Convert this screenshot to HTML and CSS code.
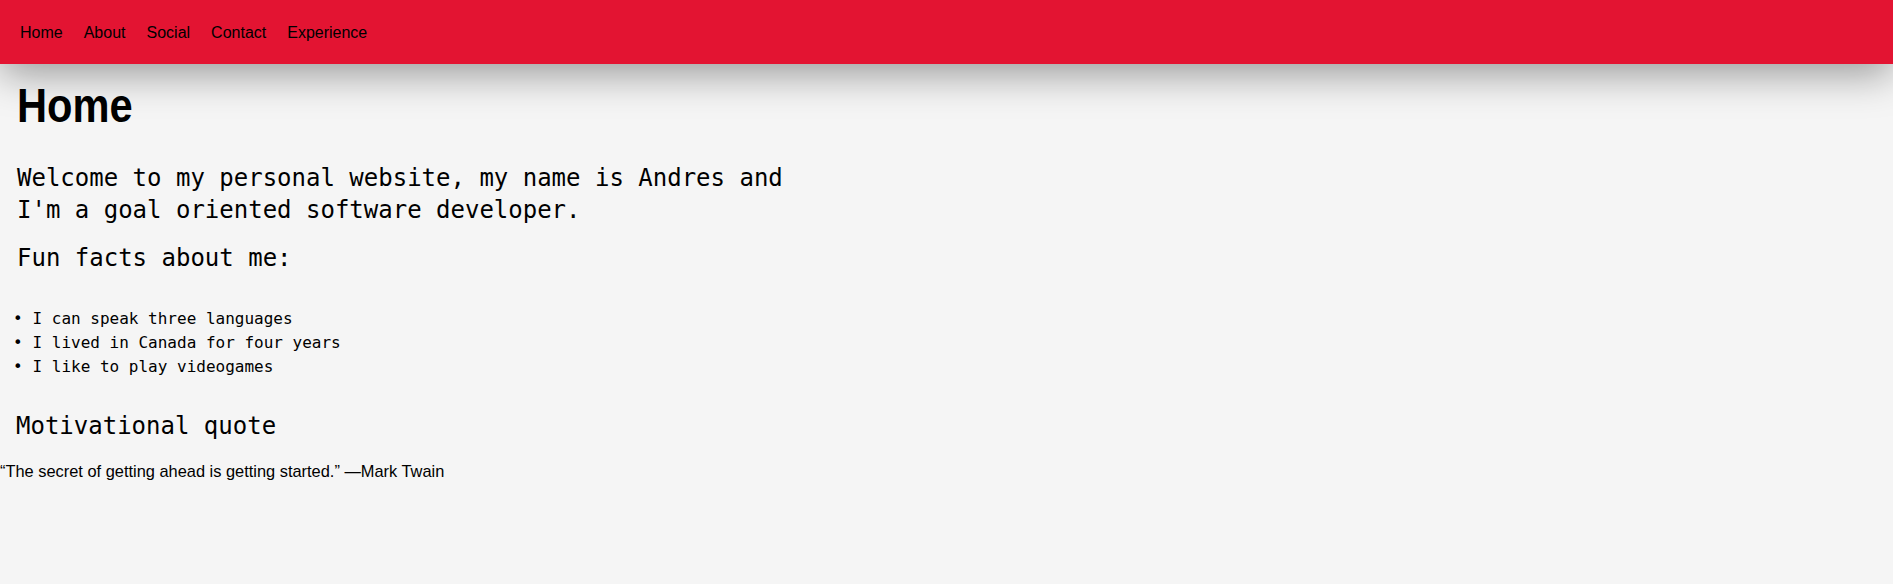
FILE: index.html
```html
<!DOCTYPE html>
<html lang="en">
<head>
<meta charset="utf-8">
<title>Andres</title>
<link rel="stylesheet" href="styles.css">
</head>
<body>
<nav class="topnav">
  <a class="nav-link" href="#">Home</a>
  <a class="nav-link" href="#">About</a>
  <a class="nav-link" href="#">Social</a>
  <a class="nav-link" href="#">Contact</a>
  <a class="nav-link" href="#">Experience</a>
</nav>
<main class="page">
  <section class="hero">
    <h1 class="hero-title"><span class="hero-title-text">Home</span></h1>
    <p class="intro-text">Welcome to my personal website, my name is Andres and I'm a goal oriented software developer.</p>
    <h3 class="facts-title">Fun facts about me:</h3>
  </section>
  <ul class="facts-list">
    <li class="fact">I can speak three languages</li>
    <li class="fact">I lived in Canada for four years</li>
    <li class="fact">I like to play videogames</li>
  </ul>
  <h2 class="quote-title">Motivational quote</h2>
  <p class="quote">“The secret of getting ahead is getting started.” —Mark Twain</p>
</main>
</body>
</html>
```

FILE: styles.css
```css
html, body {
  margin: 0;
  padding: 0;
}

body {
  background: #f5f5f5;
  color: #000;
  font-family: "Liberation Sans", Arial, sans-serif;
}

.topnav {
  position: relative;
  z-index: 1;
  height: 64px;
  box-sizing: border-box;
  padding: 1px 0 0 20px;
  display: flex;
  align-items: center;
  gap: 21px;
  background: #e31432;
  box-shadow: 0 10px 40px rgba(0, 0, 0, 0.38);
}

.nav-link {
  color: #000;
  text-decoration: none;
  font-family: "Liberation Sans", Arial, sans-serif;
  font-size: 16px;
  line-height: 18px;
}

.page {
  display: flex;
  flex-direction: column;
}

.hero {
  padding-left: 17px;
}

.hero-title {
  margin: 13px 0 0;
  font-family: "Liberation Sans", Arial, sans-serif;
  font-weight: bold;
  font-size: 49px;
  line-height: 56px;
}

.hero-title-text {
  display: inline-block;
  transform: scaleX(0.85);
  transform-origin: left center;
}

.intro-text {
  margin: 29px 0 0;
  max-width: 800px;
  font-family: "DejaVu Sans Mono", monospace;
  font-size: 24px;
  line-height: 32px;
}

.facts-title {
  margin: 17px 0 0;
  font-family: "DejaVu Sans Mono", monospace;
  font-weight: normal;
  font-size: 24px;
  line-height: 30px;
}

.facts-list {
  margin: 33.5px 0 0;
  padding-left: 13px;
  list-style: none;
  font-family: "DejaVu Sans Mono", monospace;
  font-size: 16px;
  line-height: 24px;
}

.fact::before {
  content: "•";
  display: inline-block;
  width: 19.5px;
}

.quote-title {
  margin: 33.5px 0 0;
  padding-left: 16px;
  font-family: "DejaVu Sans Mono", monospace;
  font-weight: normal;
  font-size: 24px;
  line-height: 28.5px;
}

.quote {
  margin: 21px 0 0;
  font-family: "Liberation Sans", Arial, sans-serif;
  font-size: 16.4px;
  line-height: 18px;
}
```
